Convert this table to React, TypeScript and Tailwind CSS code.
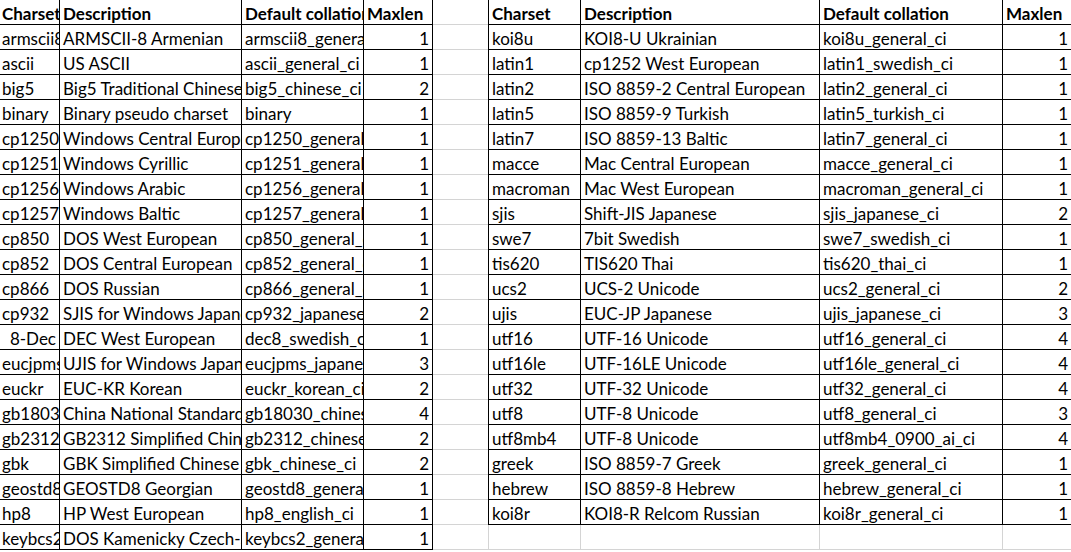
const leftRows: [string, string, string, string][] = [
  ["armscii8", "ARMSCII-8 Armenian", "armscii8_general_ci", "1"],
  ["ascii", "US ASCII", "ascii_general_ci", "1"],
  ["big5", "Big5 Traditional Chinese", "big5_chinese_ci", "2"],
  ["binary", "Binary pseudo charset", "binary", "1"],
  ["cp1250", "Windows Central European", "cp1250_general_ci", "1"],
  ["cp1251", "Windows Cyrillic", "cp1251_general_ci", "1"],
  ["cp1256", "Windows Arabic", "cp1256_general_ci", "1"],
  ["cp1257", "Windows Baltic", "cp1257_general_ci", "1"],
  ["cp850", "DOS West European", "cp850_general_ci", "1"],
  ["cp852", "DOS Central European", "cp852_general_ci", "1"],
  ["cp866", "DOS Russian", "cp866_general_ci", "1"],
  ["cp932", "SJIS for Windows Japanese", "cp932_japanese_ci", "2"],
  ["8-Dec", "DEC West European", "dec8_swedish_ci", "1"],
  ["eucjpms", "UJIS for Windows Japanese", "eucjpms_japanese_ci", "3"],
  ["euckr", "EUC-KR Korean", "euckr_korean_ci", "2"],
  ["gb18030", "China National Standard GB18030", "gb18030_chinese_ci", "4"],
  ["gb2312", "GB2312 Simplified Chinese", "gb2312_chinese_ci", "2"],
  ["gbk", "GBK Simplified Chinese", "gbk_chinese_ci", "2"],
  ["geostd8", "GEOSTD8 Georgian", "geostd8_general_ci", "1"],
  ["hp8", "HP West European", "hp8_english_ci", "1"],
  ["keybcs2", "DOS Kamenicky Czech-Slovak", "keybcs2_general_ci", "1"],
];

const rightRows: [string, string, string, string][] = [
  ["koi8u", "KOI8-U Ukrainian", "koi8u_general_ci", "1"],
  ["latin1", "cp1252 West European", "latin1_swedish_ci", "1"],
  ["latin2", "ISO 8859-2 Central European", "latin2_general_ci", "1"],
  ["latin5", "ISO 8859-9 Turkish", "latin5_turkish_ci", "1"],
  ["latin7", "ISO 8859-13 Baltic", "latin7_general_ci", "1"],
  ["macce", "Mac Central European", "macce_general_ci", "1"],
  ["macroman", "Mac West European", "macroman_general_ci", "1"],
  ["sjis", "Shift-JIS Japanese", "sjis_japanese_ci", "2"],
  ["swe7", "7bit Swedish", "swe7_swedish_ci", "1"],
  ["tis620", "TIS620 Thai", "tis620_thai_ci", "1"],
  ["ucs2", "UCS-2 Unicode", "ucs2_general_ci", "2"],
  ["ujis", "EUC-JP Japanese", "ujis_japanese_ci", "3"],
  ["utf16", "UTF-16 Unicode", "utf16_general_ci", "4"],
  ["utf16le", "UTF-16LE Unicode", "utf16le_general_ci", "4"],
  ["utf32", "UTF-32 Unicode", "utf32_general_ci", "4"],
  ["utf8", "UTF-8 Unicode", "utf8_general_ci", "3"],
  ["utf8mb4", "UTF-8 Unicode", "utf8mb4_0900_ai_ci", "4"],
  ["greek", "ISO 8859-7 Greek", "greek_general_ci", "1"],
  ["hebrew", "ISO 8859-8 Hebrew", "hebrew_general_ci", "1"],
  ["koi8r", "KOI8-R Relcom Russian", "koi8r_general_ci", "1"],
];

const header = ["Charset", "Description", "Default collation", "Maxlen"];

const cell = "h-[25px] shrink-0 overflow-hidden whitespace-nowrap flex items-center pt-[4px] border-b";

function Table({ rows, widths, left }: { rows: string[][]; widths: string[]; left?: boolean }) {
  return (
    <div className="flex flex-col">
      {[header, ...rows].map((row, r) => (
        <div key={r} className={`flex ${left ? "border-l border-black" : ""}`}>
          {row.map((text, c) => {
            const right = c === 3 || (text === "8-Dec" && r > 0);
            return (
              <div
                key={c}
                className={`${cell} ${widths[c]} border-r border-black px-[3px] ${
                  r === 0 ? "font-bold" : ""
                } ${right && r > 0 ? "justify-end" : ""}`}
              >
                {text}
              </div>
            );
          })}
        </div>
      ))}
    </div>
  );
}

export default function App() {
  const leftW = ["w-[60px] pl-[2px]", "w-[182px]", "w-[122px]", "w-[69px]"];
  const rightW = ["w-[92px]", "w-[239px]", "w-[183px]", "w-[69px]"];
  return (
    <div
      className="w-[1071px] h-[552px] overflow-hidden bg-white text-black text-[17px] leading-[20px]"
      style={{ fontFamily: "Lato, 'Liberation Sans', sans-serif" }}
    >
      <div className="flex">
        <Table rows={leftRows} widths={leftW} />
        {/* empty spacer column with sheet gridlines */}
        <div className="flex flex-col">
          {Array.from({ length: 22 }).map((_, i) => (
            <div key={i} className="w-[55px] h-[25px] border-b border-[#d4d4d4]" />
          ))}
        </div>
        <div className="flex flex-col">
          <Table rows={rightRows} widths={rightW} left />
          <div className="flex h-[25px] border-l border-[#d4d4d4]">
            <div className="w-[92px] border-r border-b border-[#d4d4d4]" />
            <div className="w-[239px] border-r border-b border-[#d4d4d4]" />
            <div className="w-[183px] border-r border-b border-[#d4d4d4]" />
            <div className="w-[69px] border-b border-[#d4d4d4]" />
          </div>
        </div>
      </div>
    </div>
  );
}
